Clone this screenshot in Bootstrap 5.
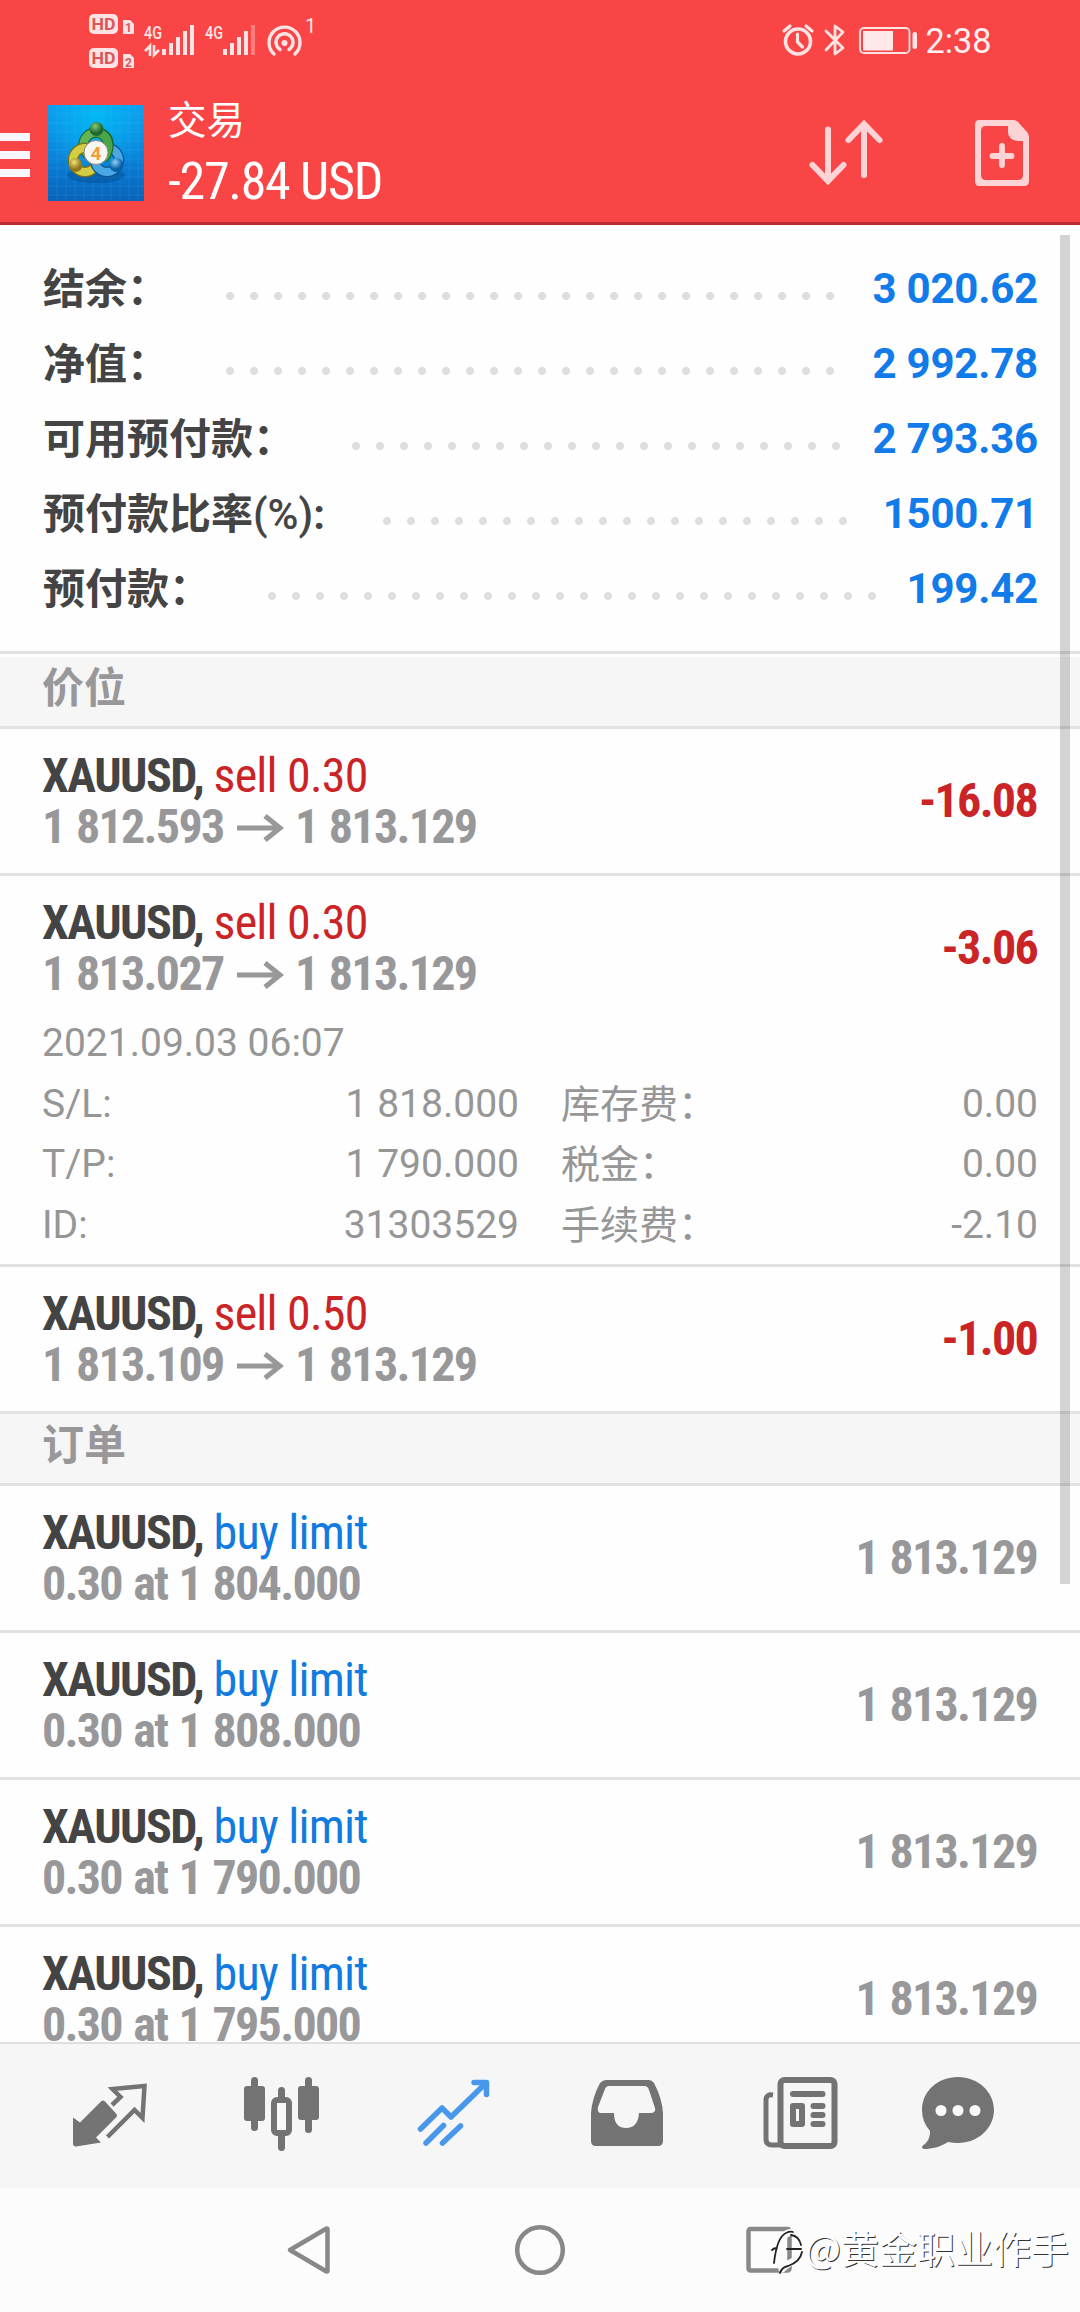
<!DOCTYPE html>
<html lang="zh-CN">
<head>
<meta charset="utf-8">
<meta name="viewport" content="width=device-width, initial-scale=1">
<title>交易</title>
<link href="https://cdn.jsdelivr.net/npm/bootstrap@5.3.0/dist/css/bootstrap.min.css" rel="stylesheet">
<style>
body{font-family:Roboto,"Noto Sans CJK SC",sans-serif;background:#fefefe;color:#444;height:2312px;overflow:hidden}
svg{display:block;flex:none}
svg text{font-family:Roboto,"Noto Sans CJK SC",sans-serif}
.top-area{height:225px;background:#fa4546;border-bottom:3px solid #b92c30;color:#fff;flex:none}
.status-line{height:80px}
.title-line{height:142px}
.title-name{font-size:38.5px;line-height:50px;padding-top:16px}
.title-sum{font-size:52px;line-height:64px;padding-top:4px}
.cond{font-family:"Roboto Condensed",Roboto,sans-serif;white-space:pre;letter-spacing:-.8px}
.title-sum .cond{letter-spacing:-1.3px}
.cond b,b.cond,.prices .cond,.prices.cond{letter-spacing:-1.7px;word-spacing:2px}
.cond b{letter-spacing:-1.5px}
.cond-end{margin:-2px 1px 0 0}
.summary{padding:26px 42px 25px;border-bottom:3px solid #e2e2e2;margin-bottom:3px}
.sum-line{height:75px;line-height:75px;font-size:42px;font-weight:700}
.sum-line>span{padding:2px 0 0 1px}
.sum-line b{font-weight:700;color:#117be9;letter-spacing:-.2px}
.dots{height:8px;margin-top:14px;background:radial-gradient(circle at 12px 4px,#dedede 3.6px,transparent 4.4px) right 0/24px 8px}
.sect{height:72px;line-height:63px;padding-left:42px;font-size:42px;font-weight:700;color:#98989a;background:#f6f6f6;border-bottom:3px solid #e2e2e2}
.deal{padding:21px 42px;border-bottom:3px solid #e2e2e2}
.deal-txt{font-size:48px;line-height:51px}
.prices{color:#98989a;font-weight:700}
.arr{margin:2px 10px 0 2px}
.sell{color:#cb2427}.buy{color:#117be0}
.details{font-size:39px;line-height:60.5px;color:#969696;padding-top:14px;margin-bottom:-12px}
.d-left{width:477px;margin-right:41px}
.d-left+div>span:first-child{padding:1px 0 0 1px;margin-bottom:-1px}
.content-area{height:1817px;overflow:hidden;position:relative}
.scroll-thumb{position:absolute;left:1060px;top:10px;width:10px;height:1349px;background:rgba(0,0,0,.165)}
.tabs{height:146px;background:#f6f6f6;border-top:2px solid #dfdfdf;padding-left:24px}
.sys{height:124px;background:#fcfcfc;position:relative}
.stamp{position:absolute;left:769px;top:31px;height:58px;color:#fff}
.stamp span{font-family:"Noto Sans CJK SC",sans-serif;font-weight:400;font-size:38px;line-height:56px;text-shadow:1px 1px 0 #333}
</style>
</head>
<body class="d-flex flex-column">
<header class="top-area">
 <div class="status-line d-flex">
  <svg width="540" height="80" viewBox="0 0 540 80" fill="#fde3e3">
   <rect x="89" y="14" width="29" height="20" rx="5"/><rect x="89" y="48" width="29" height="20" rx="5"/>
   <path d="M123 20h7l4 4v10h-11zM123 54h7l4 4v10h-11z"/>
   <g fill="#d9575a" font-weight="700"><text x="91.500" y="30" font-size="17" textLength="24" lengthAdjust="spacingAndGlyphs">HD</text><text x="91.500" y="64" font-size="17" textLength="24" lengthAdjust="spacingAndGlyphs">HD</text><text x="125" y="32" font-size="12">1</text><text x="125" y="66.500" font-size="12">2</text></g>
   <g font-weight="500" font-size="19"><text x="144" y="38.500" textLength="18" lengthAdjust="spacingAndGlyphs">4G</text><text x="205" y="38.500" textLength="18" lengthAdjust="spacingAndGlyphs">4G</text></g>
   <path d="M145 51l5-5v10M154 45v10l5-5" fill="none" stroke="#fde3e3" stroke-width="2.600"/>
   <g fill="none" stroke="#fde3e3" stroke-width="4"><path d="M164 49v6M171 43v12M178 37v18M185 31v24M192 25v30M225 49v6M232 43v12M239 37v18M246 31v24"/><path d="M253 25v30" opacity=".35"/></g>
   <g fill="none" stroke="#fde3e3" stroke-width="3.400" stroke-linecap="round"><path d="M274 54a15.500 15.500 0 1 1 21 0M280 49.500a8.500 8.500 0 1 1 9 0"/></g><circle cx="284.500" cy="43" r="3"/>
   <text x="305" y="33" font-size="20">1</text>
  </svg>
  <svg width="540" height="80" viewBox="540 0 540 80" fill="none" stroke="#fde3e3">
   <circle cx="798" cy="41.500" r="12.500" stroke-width="3.600"/><path d="M797.500 34v8l5 5M784 31l6-5M812 31l-6-5" stroke-width="3.200" stroke-linecap="round"/>
   <path d="M826 31l17 17-8 6V26l8 6-17 18" stroke-width="2.800" stroke-linejoin="round" stroke-linecap="round"/>
   <rect x="860" y="28" width="49.500" height="25" rx="4" stroke-width="1.800"/><rect x="863" y="31" width="30" height="19.500" fill="#fde9e9" stroke="none"/><rect x="912.500" y="32" width="4.500" height="17" rx="2" fill="#fde3e3" stroke="none"/>
   <text x="925.500" y="53" font-size="35.500" fill="#fff0f0" stroke="none" textLength="66" lengthAdjust="spacingAndGlyphs">2:38</text>
  </svg>
 </div>
 <div class="title-line d-flex">
  <svg width="168" height="142" viewBox="0 80 168 142">
   <defs><linearGradient id="sky" x2="0" y2="1"><stop stop-color="#1299ee"/><stop offset=".5" stop-color="#0a86dc"/><stop offset="1" stop-color="#0862b8"/></linearGradient>
   <radialGradient id="glow" cx=".5" cy=".1" r=".6"><stop stop-color="#00b8f4"/><stop offset="1" stop-color="#00b8f4" stop-opacity="0"/></radialGradient>
   <radialGradient id="gg" cx=".4" cy=".3"><stop stop-color="#8aca70"/><stop offset="1" stop-color="#1d6a30"/></radialGradient>
   <radialGradient id="gy" cx=".4" cy=".3"><stop stop-color="#f0e478"/><stop offset="1" stop-color="#91781b"/></radialGradient>
   <radialGradient id="gb" cx=".4" cy=".3"><stop stop-color="#8cd0f8"/><stop offset="1" stop-color="#0860a8"/></radialGradient></defs>
   <path d="M0 133h30v8H0zM0 151h30v8H0zM0 169h30v8H0z" fill="#f8f6ff"/>
   <rect x="48" y="105" width="96" height="96" fill="url(#sky)"/><rect x="48" y="105" width="96" height="96" fill="url(#glow)"/>
   <path d="M57 105v96M66 105v96M75 105v96M84 105v96M93 105v96M102 105v96M111 105v96M120 105v96M129 105v96M138 105v96M48 114h96M48 123h96M48 132h96M48 141h96M48 150h96M48 159h96M48 168h96M48 177h96M48 186h96M48 195h96" stroke="#5cc8ff" stroke-opacity=".14"/>
   <ellipse cx="96" cy="175" rx="29" ry="8" fill="#033f7c" opacity=".35"/>
   <circle cx="96" cy="145" r="12.500" fill="none" stroke="#1b6a30" stroke-width="10.500"/><circle cx="96" cy="145" r="12.500" fill="none" stroke="#62b455" stroke-width="8"/>
   <circle cx="85" cy="160" r="12" fill="none" stroke="#77711c" stroke-width="10.500"/><circle cx="85" cy="160" r="12" fill="none" stroke="#d2cd43" stroke-width="8"/>
   <circle cx="107" cy="160" r="12" fill="none" stroke="#0b5597" stroke-width="10.500"/><circle cx="107" cy="160" r="12" fill="none" stroke="#49a8e4" stroke-width="8"/>
   <path d="M99 132.500q10 3 9.500 14-1 8-5 12" fill="none" stroke="#1b6a30" stroke-width="10.500"/><path d="M97 132.500q11 2 11.500 14-1 8-5 12" fill="none" stroke="#4ba64b" stroke-width="8"/>
   <circle cx="96.500" cy="129" r="7" fill="url(#gg)"/><circle cx="75.500" cy="165" r="7" fill="url(#gy)"/><circle cx="116.500" cy="165" r="7" fill="url(#gb)"/>
   <circle cx="96" cy="152.500" r="12" fill="#f8f6f3" stroke="#8a8a80"/><text x="90.500" y="159.500" font-size="19" font-weight="700" fill="#f29c3c">4</text>
  </svg>
  <div class="flex-grow-1"><div class="title-name">交易</div><div class="title-sum"><span class="cond">-27.84 USD</span></div></div>
  <svg width="290" height="142" viewBox="790 80 290 142" fill="none" stroke="#fdd4d6">
   <path d="M828 129.500V180M812.500 165L828 181l15.500-16M864 175V125M848.500 140L864 124l15.500 16" stroke-width="6" stroke-linecap="round"/>
   <path fill="#fdd4d6" stroke="none" fill-rule="evenodd" d="M979 120h34q3 0 5 2l9 10q2 2 2 5v44q0 5-5 5h-45q-4 0-4-5v-56q0-5 4-5zm7 6q-5 0-5 5v44q0 5 5 5h32q5 0 5-5v-34h-6q-9-2-9-9v-6z"/>
   <path d="M1002 146v19M992.500 156h19" stroke-width="5.800" stroke-linecap="round"/>
  </svg>
 </div>
</header>

<main class="content-area flex-shrink-0">
 <section class="summary">
  <div class="sum-line d-flex align-items-center"><span>结余：</span><div class="dots ms-auto" style="width:624px"></div><b class="text-end" style="width:196px">3 020.62</b></div>
  <div class="sum-line d-flex align-items-center"><span>净值：</span><div class="dots ms-auto" style="width:624px"></div><b class="text-end" style="width:196px">2 992.78</b></div>
  <div class="sum-line d-flex align-items-center"><span>可用预付款：</span><div class="dots ms-auto" style="width:504px"></div><b class="text-end" style="width:190px">2 793.36</b></div>
  <div class="sum-line d-flex align-items-center"><span>预付款比率<span class="fw-medium">(%)</span>:</span><div class="dots ms-auto" style="width:480px"></div><b class="text-end" style="width:183px">1500.71</b></div>
  <div class="sum-line d-flex align-items-center"><span>预付款：</span><div class="dots ms-auto" style="width:624px"></div><b class="text-end" style="width:154px">199.42</b></div>
 </section>

 <div class="sect">价位</div>
 <div class="deal">
  <div class="deal-txt d-flex justify-content-between align-items-center"><div><div class="cond"><b>XAUUSD,</b><span class="sell"> sell 0.30</span></div><div class="prices d-flex align-items-center"><span class="cond">1 812.593 </span><svg class="arr" width="48" height="28" viewBox="0 0 48 28"><path d="M0 14h43M28 2l15 12-15 12" fill="none" stroke="#98989a" stroke-width="5"/></svg><span class="cond">1 813.129</span></div></div><b class="cond cond-end sell">-16.08</b></div>
 </div>
 <div class="deal">
  <div class="deal-txt d-flex justify-content-between align-items-center"><div><div class="cond"><b>XAUUSD,</b><span class="sell"> sell 0.30</span></div><div class="prices d-flex align-items-center"><span class="cond">1 813.027 </span><svg class="arr" width="48" height="28" viewBox="0 0 48 28"><path d="M0 14h43M28 2l15 12-15 12" fill="none" stroke="#98989a" stroke-width="5"/></svg><span class="cond">1 813.129</span></div></div><b class="cond cond-end sell">-3.06</b></div>
  <div class="details">
   <div>2021.09.03 06:07</div>
   <div class="d-flex"><div class="d-left d-flex justify-content-between"><span>S/L:</span><span>1 818.000</span></div><div class="flex-grow-1 d-flex justify-content-between"><span>库存费：</span><span>0.00</span></div></div>
   <div class="d-flex"><div class="d-left d-flex justify-content-between"><span>T/P:</span><span>1 790.000</span></div><div class="flex-grow-1 d-flex justify-content-between"><span>税金：</span><span>0.00</span></div></div>
   <div class="d-flex"><div class="d-left d-flex justify-content-between"><span>ID:</span><span>31303529</span></div><div class="flex-grow-1 d-flex justify-content-between"><span>手续费：</span><span>-2.10</span></div></div>
  </div>
 </div>
 <div class="deal">
  <div class="deal-txt d-flex justify-content-between align-items-center"><div><div class="cond"><b>XAUUSD,</b><span class="sell"> sell 0.50</span></div><div class="prices d-flex align-items-center"><span class="cond">1 813.109 </span><svg class="arr" width="48" height="28" viewBox="0 0 48 28"><path d="M0 14h43M28 2l15 12-15 12" fill="none" stroke="#98989a" stroke-width="5"/></svg><span class="cond">1 813.129</span></div></div><b class="cond cond-end sell">-1.00</b></div>
 </div>

 <div class="sect">订单</div>
 <div class="deal"><div class="deal-txt d-flex justify-content-between align-items-center"><div><div class="cond"><b>XAUUSD,</b><span class="buy"> buy limit</span></div><div class="prices"><span class="cond">0.30 at 1 804.000</span></div></div><span class="prices cond cond-end">1 813.129</span></div></div>
 <div class="deal"><div class="deal-txt d-flex justify-content-between align-items-center"><div><div class="cond"><b>XAUUSD,</b><span class="buy"> buy limit</span></div><div class="prices"><span class="cond">0.30 at 1 808.000</span></div></div><span class="prices cond cond-end">1 813.129</span></div></div>
 <div class="deal"><div class="deal-txt d-flex justify-content-between align-items-center"><div><div class="cond"><b>XAUUSD,</b><span class="buy"> buy limit</span></div><div class="prices"><span class="cond">0.30 at 1 790.000</span></div></div><span class="prices cond cond-end">1 813.129</span></div></div>
 <div class="deal"><div class="deal-txt d-flex justify-content-between align-items-center"><div><div class="cond"><b>XAUUSD,</b><span class="buy"> buy limit</span></div><div class="prices"><span class="cond">0.30 at 1 795.000</span></div></div><span class="prices cond cond-end">1 813.129</span></div></div>
 <div class="scroll-thumb"></div>
</main>

<nav class="tabs d-flex flex-shrink-0">
 <svg width="172" height="144" viewBox="24 2044 172 144"><path d="M101 2101.500q2-2 4 0l11 12q2 2 0 4l-20 20 5 5-25 4q-3 0-3-3v-26l7 5z" fill="#737373"/><path d="M112 2105l8.500-8-8-8 32-3-2 32-8-8-27 27" fill="none" stroke="#737373" stroke-width="4.500"/></svg>
 <svg width="172" height="144" viewBox="196 2044 172 144"><g fill="#737373"><rect x="244" y="2086" width="21" height="35" rx="3"/><rect x="251" y="2077" width="7" height="54" rx="3.500"/><rect x="298" y="2086" width="21" height="34" rx="3"/><rect x="305" y="2077" width="7" height="56" rx="3.500"/><rect x="278" y="2087" width="7" height="64" rx="3.500"/></g><rect x="274" y="2100" width="15" height="33" rx="3" fill="#f8f8f8" stroke="#737373" stroke-width="6"/></svg>
 <svg width="172" height="144" viewBox="368 2044 172 144"><path d="M420.500 2129L442 2108l9 9 35-34M474 2082.500h12.500v12M426 2143l17.500-17.500M442.500 2143l18-17" fill="none" stroke="#4797ea" stroke-width="5.500" stroke-linecap="round" stroke-linejoin="round"/></svg>
 <svg width="172" height="144" viewBox="540 2044 172 144"><path fill="#737373" fill-rule="evenodd" d="M606 2080h43q3 0 5 3 8 15 9 30v28q0 5-5 5h-62q-5 0-5-5v-28q1-15 9-30 3-3 6-3zm3 6q-3 0-4 3l-7 18q-1 5 2 6h14q0 15 12 15t13-15h13q4-1 3-5l-6-18q-1-4-5-4z"/></svg>
 <svg width="172" height="144" viewBox="712 2044 172 144" fill="none" stroke="#737373"><path d="M773 2095q-7-1-7 5v39q0 6 6 6h12" stroke-width="5"/><rect x="780.500" y="2080" width="54" height="66" rx="4" stroke-width="6"/><path d="M793 2094h29.500M813.500 2106h9M813.500 2115h9M813.500 2124h9" stroke-width="6" stroke-linecap="round"/><rect x="793" y="2106" width="9" height="18" stroke-width="6" stroke-linejoin="round"/></svg>
 <svg width="172" height="144" viewBox="884 2044 172 144"><path d="M958 2077c20 0 36 15 36 33s-16 33-36 33q-5 0-10-1c-8 5-16 7-24 7-4-1-1-4 1-5 4-4 5-8 5-13q-8-9-8-21c0-19 16-33 36-33z" fill="#737373"/><circle cx="941" cy="2110.500" r="5.500" fill="#fafafa"/><circle cx="958" cy="2110.500" r="5.500" fill="#fafafa"/><circle cx="975" cy="2110.500" r="5.500" fill="#fafafa"/></svg>
</nav>
<footer class="sys flex-shrink-0">
 <svg width="1080" height="124" viewBox="0 2188 1080 124" fill="none" stroke="#888" stroke-width="4.500" stroke-linejoin="round"><path d="M290 2250l36.500-21.500q1 0 1 1v41q0 1-1 1z"/><circle cx="540" cy="2250" r="22.800"/><rect x="748.500" y="2229" width="41" height="41.500" rx="2"/></svg>
 <div class="stamp d-flex">
  <svg width="36" height="58" viewBox="769 2219 36 58" fill="none" stroke-linecap="round"><path d="M776 2264q1-26 12-31 10-3 12 8M778 2253h4M782 2269l6-5q13-5 14-18" stroke="#fcfcfc" stroke-width="7"/><path d="M774 2263q3-26 12-30 4-2 7-1M772 2250q2-2 5-2M787 2249h14M791 2235q8 1 10 10M780 2273q2-6 8-7 12-4 14-14" stroke="#222" stroke-width="1.800"/></svg>
  <span>@黄金职业作手</span>
 </div>
</footer>
<script src="https://cdn.jsdelivr.net/npm/bootstrap@5.3.0/dist/js/bootstrap.bundle.min.js"></script>
</body>
</html>
